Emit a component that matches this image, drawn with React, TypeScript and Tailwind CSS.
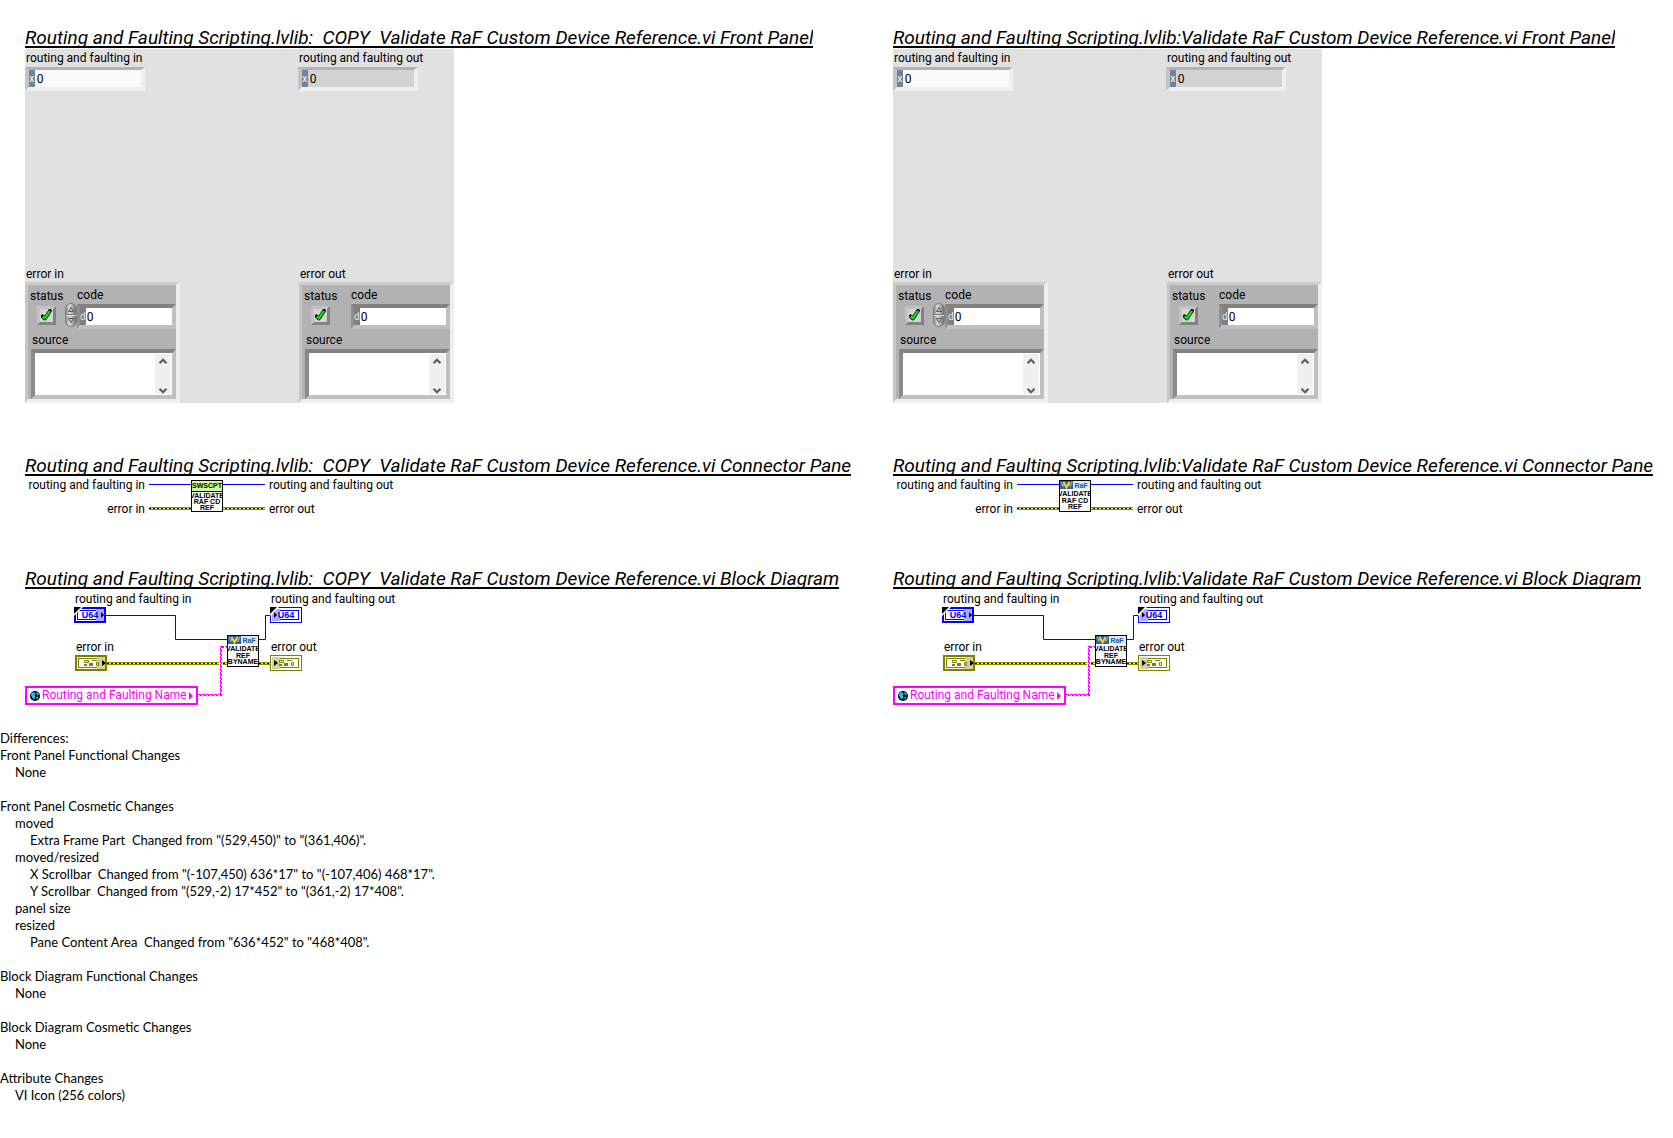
import React from "react";

type Variant = "script" | "raf";

const changes: { text: string; level: number }[] = [
  { text: "Differences:", level: 0 },
  { text: "Front Panel Functional Changes", level: 0 },
  { text: "None", level: 1 },
  { text: "", level: 0 },
  { text: "Front Panel Cosmetic Changes", level: 0 },
  { text: "moved", level: 1 },
  { text: 'Extra Frame Part  Changed from "(529,450)" to "(361,406)".', level: 2 },
  { text: "moved/resized", level: 1 },
  { text: 'X Scrollbar  Changed from "(-107,450) 636*17" to "(-107,406) 468*17".', level: 2 },
  { text: 'Y Scrollbar  Changed from "(529,-2) 17*452" to "(361,-2) 17*408".', level: 2 },
  { text: "panel size", level: 1 },
  { text: "resized", level: 1 },
  { text: 'Pane Content Area  Changed from "636*452" to "468*408".', level: 2 },
  { text: "", level: 0 },
  { text: "Block Diagram Functional Changes", level: 0 },
  { text: "None", level: 1 },
  { text: "", level: 0 },
  { text: "Block Diagram Cosmetic Changes", level: 0 },
  { text: "None", level: 1 },
  { text: "", level: 0 },
  { text: "Attribute Changes", level: 0 },
  { text: "VI Icon (256 colors)", level: 1 },
];

const indents = ["", "pl-[15px]", "pl-[30px]"];

function Heading({ children }: { children: string }) {
  return (
    <h2 className="h-[23px] w-fit overflow-hidden border-b-2 border-black font-['Roboto',sans-serif] text-[19px] leading-[26px] whitespace-pre italic">
      {children}
    </h2>
  );
}

/* ---------- Front panel ---------- */

function RefField({ id, label, readOnly }: { id: string; label: string; readOnly?: boolean }) {
  return (
    <div className="pt-px">
      <label htmlFor={id} className="block pl-px">
        {label}
      </label>
      <div className="mt-px flex h-6 w-[120px] border-t-[3px] border-r-4 border-b-4 border-l-4 border-t-[#b2b2b2] border-r-[#efefef] border-b-[#efefef] border-l-[#c4c4c4]">
        <span className="w-[6px] bg-[#72839c] text-center text-[10px] leading-[17px] text-white">x</span>
        <input
          id={id}
          defaultValue="0"
          readOnly={readOnly}
          className={
            readOnly
              ? "w-full min-w-0 bg-[#d2d2d2] pl-[2px] outline-none"
              : "w-full min-w-0 bg-[#fafafa] pl-[2px] outline-none"
          }
        />
      </div>
    </div>
  );
}

function Spinner() {
  return (
    <svg width="12" height="24" viewBox="0 0 12 24" className="mt-[18px] block" aria-hidden="true">
      <defs>
        <linearGradient id="knob" x1="0" x2="1" y1="0" y2="0">
          <stop offset="0" stopColor="#7c7c7c" />
          <stop offset="0.35" stopColor="#dcdcdc" />
          <stop offset="0.65" stopColor="#aaaaaa" />
          <stop offset="1" stopColor="#606060" />
        </linearGradient>
      </defs>
      <rect x="0.5" y="0.5" width="11" height="23" rx="5.5" fill="url(#knob)" stroke="#7e7e7e" />
      <path d="M1 11.5H11" stroke="#777" />
      <path d="M1 12.5H11" stroke="#ddd" />
      <path d="M3.5 8.5L6 4.5L8.5 8.5Z" fill="#c8c8c8" stroke="#5a5a5a" />
      <path d="M3.5 15.5L6 19.5L8.5 15.5Z" fill="#c8c8c8" stroke="#5a5a5a" />
    </svg>
  );
}

function Chevron({ down }: { down?: boolean }) {
  return (
    <svg width="8" height="6" viewBox="0 0 8 6" className="block" aria-hidden="true">
      <path d={down ? "M0.5 0.8L4 4.3L7.5 0.8" : "M0.5 5.2L4 1.7L7.5 5.2"} fill="none" stroke="#5c5c5c" strokeWidth="2.2" />
    </svg>
  );
}

function ErrorCluster({ id, label, spinner }: { id: string; label: string; spinner?: boolean }) {
  return (
    <div className="w-[155px]">
      <div className="pl-px">{label}</div>
      <div className="h-[121px] border-t-[3px] border-r-4 border-b-4 border-l-[3px] border-t-[#cdcdcd] border-r-[#efefef] border-b-[#efefef] border-l-[#c6c6c6] bg-[#b2b2b2]">
        <div className="flex">
          <div className="w-[37px] pt-[3px]">
            <label htmlFor={`${id}-status`} className="block pl-[2px]">
              status
            </label>
            <div className="relative mt-[2px] ml-[9px] size-[19px]">
              <input
                id={`${id}-status`}
                type="checkbox"
                defaultChecked
                className="block size-[19px] appearance-none border-[3px] border-t-[#c2c2c2] border-r-[#828282] border-b-[#828282] border-l-[#c2c2c2] bg-[#d4d4d4]"
              />
              <svg width="11" height="12" viewBox="0 0 11 12" className="pointer-events-none absolute top-[3px] left-1" aria-hidden="true">
                <path d="M1.500 7.500L4 9.500L9 1.800" fill="none" stroke="#000" strokeWidth="3.6" strokeLinejoin="round" strokeLinecap="square" />
                <path d="M1.500 7.500L4 9.200L9 1.800" fill="none" stroke="#00f000" strokeWidth="2.2" />
              </svg>
            </div>
          </div>
          <div className="w-3">{spinner && <Spinner />}</div>
          <div className="w-[99px] pt-[2px]">
            <label htmlFor={`${id}-code`} className="block">
              code
            </label>
            <div className="mt-px flex h-[25px] border-4 border-l-[3px] border-t-[#828282] border-r-[#bfbfbf] border-b-[#c0c0c0] border-l-[#8e8e8e]">
              <span className="w-[6px] bg-[#808080] text-center text-[10px] leading-[17px] text-[#e6e6e6]">d</span>
              <input id={`${id}-code`} defaultValue="0" className="w-full min-w-0 bg-white pl-px outline-none" />
            </div>
          </div>
        </div>
        <label htmlFor={`${id}-source`} className="mt-[3px] block pl-1">
          source
        </label>
        <div className="mt-px ml-[3px] flex h-[50px] border-4 border-t-[#828282] border-r-[#bfbfbf] border-b-[#c0c0c0] border-l-[#8a8a8a] bg-white">
          <textarea id={`${id}-source`} className="min-w-0 flex-1 resize-none outline-none" />
          <div className="mt-px mr-px mb-px flex w-4 flex-col items-center justify-between bg-[#f0f0f0] pt-1">
            <button aria-label="Scroll up">
              <Chevron />
            </button>
            <button aria-label="Scroll down">
              <Chevron down />
            </button>
          </div>
        </div>
      </div>
    </div>
  );
}

function FrontPanel({ id }: { id: string }) {
  return (
    <div className="mt-px flex h-[354px] w-[429px] flex-col justify-between bg-[#e1e1e1]">
      <div className="grid grid-cols-[273px_1fr]">
        <RefField id={`${id}-in`} label="routing and faulting in" />
        <RefField id={`${id}-out`} label="routing and faulting out" readOnly />
      </div>
      <div className="flex justify-between">
        <ErrorCluster id={`${id}-error-in`} label="error in" spinner />
        <ErrorCluster id={`${id}-error-out`} label="error out" />
      </div>
    </div>
  );
}

/* ---------- VI icons and wires ---------- */

function ViIcon({ x, y, lines, variant }: { x: number; y: number; lines: string[]; variant: Variant }) {
  const first = variant === "script" ? 18 : 16;
  return (
    <svg x={x} y={y} width="32" height="32" viewBox="0 0 32 32">
      <rect x="0.5" y="0.5" width="31" height="31" fill="#fff" stroke="#000" />
      {variant === "script" ? (
        <>
          <rect x="1" y="1" width="30" height="10" fill="#ccff99" />
          <path d="M1 11.5H31" stroke="#000" />
          <text x="16" y="8" textAnchor="middle" className="font-['Liberation_Sans',sans-serif] text-[7px] font-bold">
            SWSCPT
          </text>
        </>
      ) : (
        <>
          <rect x="1" y="1" width="13" height="8" fill="#2f6298" />
          <rect x="14" y="1" width="17" height="8" fill="#d9e8f5" />
          <path d="M2 2L4 6L5.5 3M9.5 3L11 6L13 2" fill="none" stroke="#9aa7b0" strokeWidth="1.3" />
          <path d="M4.5 2L7.5 7.5L10.5 2" fill="none" stroke="#ffd21f" strokeWidth="2" />
          <text x="22" y="8" textAnchor="middle" className="fill-[#1f5c9c] font-['Liberation_Sans',sans-serif] text-[7px] font-bold">
            RaF
          </text>
        </>
      )}
      <svg x="1" y="0" width="30" height="32" viewBox="1 0 30 32">
        {lines.map((line, i) => (
          <text
            key={line}
            x="16"
            y={first + i * 6 + (i > 0 && variant === "raf" ? 1 : 0)}
            textAnchor="middle"
            className="font-['Liberation_Sans',sans-serif] text-[7px] font-bold"
          >
            {line}
          </text>
        ))}
      </svg>
    </svg>
  );
}

function ErrorWire({ x1, x2, y }: { x1: number; x2: number; y: number }) {
  return (
    <g>
      <path d={`M${x1} ${y}H${x2}`} stroke="#8c8c00" strokeWidth="3" />
      <path d={`M${x1} ${y}H${x2}`} stroke="#ffff33" />
      <path d={`M${x1} ${y}H${x2}`} stroke="#000" strokeDasharray="2 2" />
    </g>
  );
}

function ConnectorPane({ variant }: { variant: Variant }) {
  return (
    <div className="flex h-[90px] gap-1 pt-px">
      <div className="flex w-[120px] flex-col gap-2 text-right">
        <span>routing and faulting in</span>
        <span>error in</span>
      </div>
      <svg width="116" height="32" viewBox="0 0 116 32" className="mt-[3px]" role="img" aria-label="Connector pane">
        <path d="M0 4.5H116" stroke="#0000ff" />
        <ErrorWire x1={0} x2={116} y={28.5} />
        <ViIcon x={42} y={0} variant={variant} lines={["VALIDATE", "RAF CD", "REF"]} />
      </svg>
      <div className="flex flex-col gap-2">
        <span>routing and faulting out</span>
        <span>error out</span>
      </div>
    </div>
  );
}

/* ---------- Block diagram ---------- */

function U64Terminal({ x, y, indicator }: { x: number; y: number; indicator?: boolean }) {
  const w = indicator ? 1 : 2;
  return (
    <svg x={x} y={y} width="32" height="16" viewBox="0 0 32 16">
      <rect x={w / 2} y={w / 2} width={32 - w} height={16 - w} fill="#fff" stroke="#0000ff" strokeWidth={w} />
      {!indicator && <path d="M29.5 2V14" stroke="#4d4dff" />}
      <rect x="3.5" y="3.5" width="25" height="9" fill="#fff" stroke="#0000ff" />
      <rect x={indicator ? 2 : 22} y="2" width="8" height="12" fill="#aaaaff" />
      <text x="16" y="11" textAnchor="middle" className="fill-[#0000ff] font-['Liberation_Sans',sans-serif] text-[9px] font-bold">
        U64
      </text>
      <path d={indicator ? "M4 5L7 8L4 11Z" : "M27 5L30 8L27 11Z"} fill="#000" />
      <path d="M0 0H9L0 9Z" fill="#fff" />
      <path d="M0 0H7L0 7Z" fill="#000" />
    </svg>
  );
}

function ErrorTerminal({ x, y, indicator }: { x: number; y: number; indicator?: boolean }) {
  const w = indicator ? 1 : 2;
  return (
    <svg x={x} y={y} width="32" height="16" viewBox="0 0 32 16">
      <rect x={w / 2} y={w / 2} width={32 - w} height={16 - w} fill="#fff" stroke="#808000" strokeWidth={w} />
      <rect x="3.5" y="3.5" width="25" height="9" fill="#fff" stroke="#808000" />
      <rect x={indicator ? 2 : 22} y="2" width="8" height="12" fill="#d2d2a0" />
      <path d="M9.5 5.5H13.5V7.5H9.5ZM21.5 7.5H23.5V10.5H21.5Z" fill="none" stroke="#808000" />
      <path d="M17 5H22V6H17ZM9 9H12V11H9ZM14 8H18V11H14Z" fill="#808000" />
      <path d={indicator ? "M4 5L8 8L4 11Z" : "M27 5L31 8L27 11Z"} fill="#000" />
    </svg>
  );
}

function BlockDiagram() {
  return (
    <div className="relative h-[141px] w-[429px]">
      <svg width="310" height="120" viewBox="0 0 310 120" className="block" role="img" aria-label="Block diagram">
        <path d="M81 26.5H150.5V50.5H202M234 50.5H240.5V26.5H245" fill="none" stroke="#0000ff" />
        <ErrorWire x1={82} x2={194} y={74.5} />
        <ErrorWire x1={198} x2={202} y={74.5} />
        <ErrorWire x1={234} x2={245} y={74.5} />
        <path d="M173 105.5H196M195.5 106V57M196 57.5H202" fill="none" stroke="#ff00ff" strokeDasharray="3 1" />
        <path d="M175 106.5H197M196.5 107V57M197 58.5H202" fill="none" stroke="#ff00ff" strokeDasharray="2 2" />
        <U64Terminal x={49} y={18} />
        <U64Terminal x={245} y={18} indicator />
        <ErrorTerminal x={50} y={66} />
        <ErrorTerminal x={245} y={66} indicator />
        <ViIcon x={202} y={46} variant="raf" lines={["VALIDATE", "REF", "BYNAME"]} />
      </svg>
      <span className="absolute top-[2px] left-[50px]">routing and faulting in</span>
      <span className="absolute top-[2px] left-[246px]">routing and faulting out</span>
      <span className="absolute top-[50px] left-[51px]">error in</span>
      <span className="absolute top-[50px] left-[246px]">error out</span>
      <div className="absolute top-[97px] left-0 flex h-[19px] w-[173px] items-center border-2 border-[#ff00ff] bg-white pl-[3px] leading-[15px] text-[#ff00ff]">
        <svg width="10" height="10" viewBox="0 0 10 10" aria-hidden="true">
          <circle cx="5" cy="5" r="5" fill="#000" />
          <path d="M1.5 2L4 1L5.500 3L4.500 4.500L5.500 6L4 8.500L2.500 7L1 4.500ZM6 1L8 2L9 4L7.500 4.500L6.500 3ZM6.500 6L8.500 5.500L8 7.500L6.500 8.500Z" fill="#1cc8ff" />
        </svg>
        <span className="ml-[2px] whitespace-nowrap">Routing and Faulting Name</span>
        <svg width="4" height="8" viewBox="0 0 4 8" className="ml-[2px]" aria-hidden="true">
          <path d="M0 0L4 4L0 8Z" fill="#ff00ff" />
        </svg>
      </div>
    </div>
  );
}

function ViColumn({ id, name, variant }: { id: string; name: string; variant: Variant }) {
  return (
    <section className="min-w-0 pl-[25px]">
      <Heading>{`${name} Front Panel`}</Heading>
      <FrontPanel id={id} />
      <div className="pt-[50px]">
        <Heading>{`${name} Connector Pane`}</Heading>
        <ConnectorPane variant={variant} />
      </div>
      <Heading>{`${name} Block Diagram`}</Heading>
      <BlockDiagram />
    </section>
  );
}

export default function App() {
  return (
    <main className="min-h-screen bg-white pt-[25px] font-['Roboto',sans-serif] text-[12px] leading-[16px] text-black">
      <div className="grid grid-cols-[868fr_805fr]">
        <ViColumn id="copy" variant="script" name="Routing and Faulting Scripting.lvlib:  COPY  Validate RaF Custom Device Reference.vi" />
        <ViColumn id="original" variant="raf" name="Routing and Faulting Scripting.lvlib:Validate RaF Custom Device Reference.vi" />
      </div>
      <ul className="font-['Lato',sans-serif] text-[13px] leading-[17px]">
        {changes.map((c, i) => (
          <li key={i} className={`h-[17px] whitespace-pre ${indents[c.level]}`}>
            {c.text}
          </li>
        ))}
      </ul>
    </main>
  );
}
